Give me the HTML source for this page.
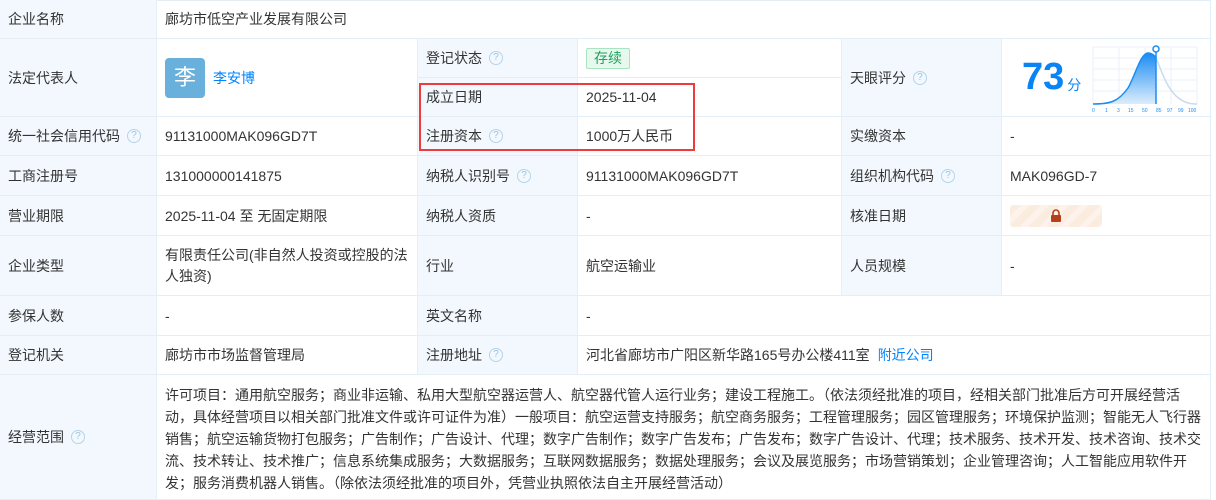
<!DOCTYPE html>
<html><head><meta charset="utf-8"><style>
*{margin:0;padding:0;box-sizing:border-box}
body{width:1216px;height:495px;background:#fff;font-family:"Liberation Sans","Noto Sans CJK SC",sans-serif;font-size:14px;color:#333;position:relative;overflow:hidden}
.c{position:absolute;border-right:1px solid #e4eef6;border-bottom:1px solid #e4eef6;display:flex;align-items:center;padding-left:8px;white-space:nowrap}
.l{background:#f2f8fd}
.q{display:inline-block;width:14px;height:14px;border:1px solid #b6d3ea;border-radius:50%;color:#9cc2e0;font-size:10px;line-height:12px;text-align:center;margin-left:7px}
.sc div{height:22px;line-height:22px}
</style></head><body>
<div style="position:absolute;left:0;top:0;width:1211px;height:495px;border-left:1px solid #e4eef6;border-top:1px solid #e4eef6"></div>
<!-- row1 -->
<div class="c l" style="left:0;top:0;width:157px;height:39px">企业名称</div>
<div class="c" style="left:157;left:157px;top:0;width:1054px;height:39px">廊坊市低空产业发展有限公司</div>
<!-- row2 -->
<div class="c l" style="left:0;top:39px;width:157px;height:78px">法定代表人</div>
<div class="c" style="left:157px;top:39px;width:261px;height:78px"><div style="width:40px;height:40px;background:#6ab0dc;border-radius:4px;color:#fff;font-size:22px;text-align:center;line-height:40px">李</div><span style="color:#0084ff;margin-left:8px">李安博</span></div>
<div class="c l" style="left:418px;top:39px;width:160px;height:39px">登记状态<span class="q">?</span></div>
<div class="c" style="left:578px;top:39px;width:264px;height:39px"><span style="background:#e7f8ee;border:1px solid #a8e3c2;color:#1ea35a;padding:0 7px;height:21px;line-height:19px;border-radius:2px">存续</span></div>
<div class="c l" style="left:418px;top:78px;width:160px;height:39px">成立日期</div>
<div class="c" style="left:578px;top:78px;width:264px;height:39px">2025-11-04</div>
<div class="c l" style="left:842px;top:39px;width:160px;height:78px">天眼评分<span class="q">?</span></div>
<div class="c" style="left:1002px;top:39px;width:209px;height:78px;padding-left:20px"><span style="color:#0a84f4;font-size:38px;font-weight:bold">73</span><span style="color:#0a84f4;font-size:14px;margin-left:3px;margin-top:14px">分</span>
<svg style="position:absolute;left:88px;top:5px" width="112" height="70" viewBox="0 0 112 70">
<g stroke="#e8f0f8" stroke-width="1"><line x1="3" y1="3" x2="3" y2="60"/><line x1="29" y1="3" x2="29" y2="60"/><line x1="55" y1="3" x2="55" y2="60"/><line x1="81" y1="3" x2="81" y2="60"/><line x1="107" y1="3" x2="107" y2="60"/><line x1="3" y1="3" x2="107" y2="3"/><line x1="3" y1="14" x2="107" y2="14"/><line x1="3" y1="25" x2="107" y2="25"/><line x1="3" y1="36" x2="107" y2="36"/><line x1="3" y1="47" x2="107" y2="47"/></g>
<defs><linearGradient id="g" x1="0" y1="0" x2="0" y2="1"><stop offset="0" stop-color="#1a8cf4"/><stop offset="1" stop-color="#dcedfc"/></linearGradient></defs>
<path d="M3 60 C20 60 28 58 38 44 C46 30 50 10 58 9 C62 9 65 12 66 14 L66 60 Z" fill="url(#g)"/>
<path d="M3 60 C20 60 28 58 38 44 C46 30 50 10 58 9 C62 9 65 12 66 14" fill="none" stroke="#1a8cf4" stroke-width="1.5"/>
<path d="M66 14 C72 28 76 42 86 52 C94 59 100 60 107 60" fill="none" stroke="#c8dced" stroke-width="1.5"/>
<line x1="66" y1="6" x2="66" y2="60" stroke="#1a8cf4" stroke-width="1.5"/>
<circle cx="66" cy="5" r="3" fill="#fff" stroke="#1a8cf4" stroke-width="1.5"/>
<g font-size="5" fill="#1a8cf4" font-family="Liberation Sans"><text x="2" y="68">0</text><text x="15" y="68">1</text><text x="27" y="68">3</text><text x="38" y="68">15</text><text x="52" y="68">50</text><text x="66" y="68">85</text><text x="77" y="68">97</text><text x="88" y="68">99</text><text x="98" y="68">100</text></g>
</svg></div>
<!-- row3 -->
<div class="c l" style="left:0;top:117px;width:157px;height:39px">统一社会信用代码<span class="q">?</span></div>
<div class="c" style="left:157px;top:117px;width:261px;height:39px">91131000MAK096GD7T</div>
<div class="c l" style="left:418px;top:117px;width:160px;height:39px">注册资本<span class="q">?</span></div>
<div class="c" style="left:578px;top:117px;width:264px;height:39px">1000万人民币</div>
<div class="c l" style="left:842px;top:117px;width:160px;height:39px">实缴资本</div>
<div class="c" style="left:1002px;top:117px;width:209px;height:39px">-</div>
<!-- row4 -->
<div class="c l" style="left:0;top:156px;width:157px;height:40px">工商注册号</div>
<div class="c" style="left:157px;top:156px;width:261px;height:40px">131000000141875</div>
<div class="c l" style="left:418px;top:156px;width:160px;height:40px">纳税人识别号<span class="q">?</span></div>
<div class="c" style="left:578px;top:156px;width:264px;height:40px">91131000MAK096GD7T</div>
<div class="c l" style="left:842px;top:156px;width:160px;height:40px">组织机构代码<span class="q">?</span></div>
<div class="c" style="left:1002px;top:156px;width:209px;height:40px">MAK096GD-7</div>
<!-- row5 -->
<div class="c l" style="left:0;top:196px;width:157px;height:40px">营业期限</div>
<div class="c" style="left:157px;top:196px;width:261px;height:40px">2025-11-04 至 无固定期限</div>
<div class="c l" style="left:418px;top:196px;width:160px;height:40px">纳税人资质</div>
<div class="c" style="left:578px;top:196px;width:264px;height:40px">-</div>
<div class="c l" style="left:842px;top:196px;width:160px;height:40px">核准日期</div>
<div class="c" style="left:1002px;top:196px;width:209px;height:40px"><div style="width:92px;height:22px;border-radius:3px;background:repeating-linear-gradient(135deg,#fbece0 0 8px,#fdf3ec 8px 14px);position:relative"><svg style="position:absolute;left:40px;top:4px" width="12" height="13" viewBox="0 0 12 13"><path d="M3 6V4a3 3 0 0 1 6 0v2" fill="none" stroke="#b4401c" stroke-width="1.6"/><rect x="1" y="6" width="10" height="7" rx="1" fill="#b4401c"/></svg></div></div>
<!-- row6 -->
<div class="c l" style="left:0;top:236px;width:157px;height:60px">企业类型</div>
<div class="c" style="left:157px;top:236px;width:261px;height:60px;white-space:normal;line-height:21px;padding-right:6px">有限责任公司(非自然人投资或控股的法人独资)</div>
<div class="c l" style="left:418px;top:236px;width:160px;height:60px">行业</div>
<div class="c" style="left:578px;top:236px;width:264px;height:60px">航空运输业</div>
<div class="c l" style="left:842px;top:236px;width:160px;height:60px">人员规模</div>
<div class="c" style="left:1002px;top:236px;width:209px;height:60px">-</div>
<!-- row7 -->
<div class="c l" style="left:0;top:296px;width:157px;height:40px">参保人数</div>
<div class="c" style="left:157px;top:296px;width:261px;height:40px">-</div>
<div class="c l" style="left:418px;top:296px;width:160px;height:40px">英文名称</div>
<div class="c" style="left:578px;top:296px;width:633px;height:40px">-</div>
<!-- row8 -->
<div class="c l" style="left:0;top:336px;width:157px;height:39px">登记机关</div>
<div class="c" style="left:157px;top:336px;width:261px;height:39px">廊坊市市场监督管理局</div>
<div class="c l" style="left:418px;top:336px;width:160px;height:39px">注册地址<span class="q">?</span></div>
<div class="c" style="left:578px;top:336px;width:633px;height:39px">河北省廊坊市广阳区新华路165号办公楼411室<span style="color:#0084ff;margin-left:8px">附近公司</span></div>
<!-- row9 -->
<div class="c l" style="left:0;top:375px;width:157px;height:125px">经营范围<span class="q">?</span></div>
<div class="c sc" style="left:157px;top:375px;width:1054px;height:125px;display:block;padding-top:9px">
<div>许可项目：通用航空服务；商业非运输、私用大型航空器运营人、航空器代管人运行业务；建设工程施工。（依法须经批准的项目，经相关部门批准后方可开展经营活</div>
<div>动，具体经营项目以相关部门批准文件或许可证件为准）一般项目：航空运营支持服务；航空商务服务；工程管理服务；园区管理服务；环境保护监测；智能无人飞行器</div>
<div>销售；航空运输货物打包服务；广告制作；广告设计、代理；数字广告制作；数字广告发布；广告发布；数字广告设计、代理；技术服务、技术开发、技术咨询、技术交</div>
<div>流、技术转让、技术推广；信息系统集成服务；大数据服务；互联网数据服务；数据处理服务；会议及展览服务；市场营销策划；企业管理咨询；人工智能应用软件开</div>
<div>发；服务消费机器人销售。（除依法须经批准的项目外，凭营业执照依法自主开展经营活动）</div>
</div>
<!-- red box -->
<div style="position:absolute;left:419px;top:83px;width:276px;height:68px;border:2px solid #ee3b3b"></div>
</body></html>
